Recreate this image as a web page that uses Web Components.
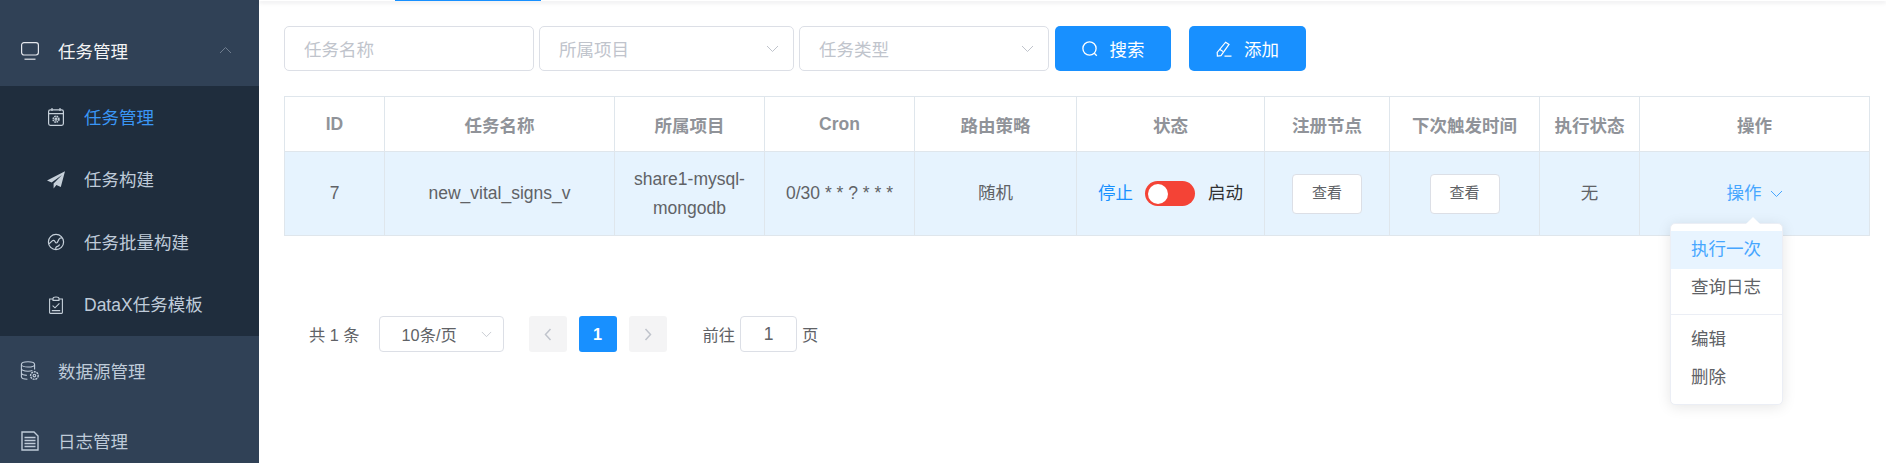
<!DOCTYPE html>
<html lang="zh">
<head>
<meta charset="utf-8">
<title>任务管理</title>
<style>
  html, body { margin: 0; height: 100%; overflow: hidden; background: #fff; }
  body {
    display: flex;
    font-family: "Liberation Sans", "Noto Sans CJK SC", sans-serif;
    color: #606266;
  }
</style>
</head>
<body>
<side-menu>
  <menu-group label="任务管理" open>
    <svg slot="icon" width="20" height="20" viewBox="0 0 20 20" fill="none" stroke="currentColor" stroke-width="1.2"><rect x="1.600" y="1.600" width="16.800" height="12.400" rx="2.400"/><path d="M4.500 18.200h11"/></svg>
    <menu-entry active>
      <svg slot="icon" width="18" height="20" viewBox="0 0 18 20" fill="none" stroke="currentColor" stroke-width="1.2"><rect x="1.600" y="2.800" width="14.800" height="15.600" rx="1.800"/><path d="M5 1v3M13 1v3M1.600 6.600h14.800"/><circle cx="9" cy="12.200" r="2.900" stroke-dasharray="1.600 .7" stroke-width="1.600"/><circle cx="9" cy="12.200" r="1"/></svg>
      任务管理
    </menu-entry>
    <menu-entry>
      <svg slot="icon" width="20" height="20" viewBox="0 0 20 20" fill="currentColor"><path d="M19 1.200 1 10.400l4.600 2.200L16 5 7.600 13.600v5l2.800-3.700 4.400 2.200z"/></svg>
      任务构建
    </menu-entry>
    <menu-entry>
      <svg slot="icon" width="18" height="18" viewBox="0 0 18 18" fill="none" stroke="currentColor" stroke-width="1.2"><circle cx="9" cy="9" r="7.600"/><path d="M2 10.600c2-.4 2.600-3.400 4.600-3.200 1.800.2 1.200 2.600 2.800 2.600 1.800 0 1.600-3.400 3.200-4.600.6-.5 1.600-.6 2.600-.5M9 16.400c-.8-1.600.2-2.600 1.600-3 1.200-.3 1.600-1 2-1.800"/></svg>
      任务批量构建
    </menu-entry>
    <menu-entry>
      <svg slot="icon" width="16" height="18" viewBox="0 0 16 18" fill="none" stroke="currentColor" stroke-width="1.1"><path d="M5 3H1.600v13.600a.8.8 0 0 0 .8.8h11.200a.8.8 0 0 0 .8-.8V3H11"/><path d="M5 4.400V2.600C5 1.800 6 1 8 1s3 .8 3 1.600v1.800z"/><path d="m4.600 9.600 2.400 2.200 4.400-4.400M3.800 14.600h8.400"/></svg>
      DataX任务模板
    </menu-entry>
  </menu-group>
  <menu-group label="数据源管理">
    <svg slot="icon" width="20" height="20" viewBox="0 0 20 20" fill="none" stroke="currentColor" stroke-width="1.1"><ellipse cx="8" cy="3.400" rx="6.600" ry="2.600"/><path d="M1.400 3.400v12.400c0 1.400 2.600 2.400 6 2.400M1.400 7.600c0 1.400 2.800 2.600 6.600 2.600 1.600 0 3.200-.2 4.400-.7M1.400 11.800c0 1.400 2.400 2.400 5.400 2.600M14.600 3.400v5"/><circle cx="14.400" cy="14.600" r="3.800" stroke-dasharray="2 .8" stroke-width="1.400"/><circle cx="14.400" cy="14.600" r="1.300"/></svg>
  </menu-group>
  <menu-group label="日志管理">
    <svg slot="icon" width="20" height="20" viewBox="0 0 20 20" fill="none" stroke="currentColor" stroke-width="1.4"><path d="M2 1h12l4 4v14H2z"/><path stroke-width="1.500" d="M4.500 6.500h11M4.500 9.500h11M4.500 12.500h11M4.500 15.500h11"/></svg>
  </menu-group>
</side-menu>

<main-panel>
  <tool-bar>
    <form-field placeholder="任务名称" style="width:250px"></form-field>
    <form-field placeholder="所属项目" select style="width:255px"></form-field>
    <form-field placeholder="任务类型" select style="width:250px"></form-field>
    <blue-button style="margin-left:1px;width:116px">
      <svg slot="icon" width="16" height="16" viewBox="0 0 16 16" fill="none" stroke="currentColor" stroke-width="1.300"><circle cx="7.500" cy="7.500" r="6.600"/><path d="m12.300 12.300 2.500 2.500"/></svg>
      搜索
    </blue-button>
    <blue-button style="margin-left:13px;width:117px">
      <svg slot="icon" width="16" height="16" viewBox="0 0 16 16" fill="none" stroke="currentColor" stroke-width="1.200"><path d="M9.600 1.200 13 3.400 5 14.600 1.400 15 1.200 11.400z"/><path d="M3.600 8.200 7 10.400M8.500 15.200h7"/></svg>
      添加
    </blue-button>
  </tool-bar>
  <task-table></task-table>
  <page-bar></page-bar>
</main-panel>

<script>
// sidebar ----------------------------------------------------------------
class SideMenu extends HTMLElement {
  constructor() {
    super()
    this.attachShadow({ mode: "open" })
    this.shadowRoot.innerHTML = `
    <style>
    :host {
      display: block;
      flex: none;
      width: 259px;
      height: 100%;
      padding-top: 16px;
      box-sizing: border-box;
      overflow: hidden;
      background: #304156;
    }
    </style>
    <slot></slot>`
  }
}
customElements.define("side-menu", SideMenu)

class MenuGroup extends HTMLElement {
  constructor() {
    super()
    this.attachShadow({ mode: "open" })
    this.shadowRoot.innerHTML = `
    <style>
    :host { display: block; }
    #title {
      display: flex;
      align-items: center;
      justify-content: flex-start;
      height: 70px;
      padding: 0 27px 0 20px;
      font-size: 17.5px;
      color: #bfcbd9;
    }
    :host([open]) #title { color: #f4f4f5; }
    #icon { display: flex; width: 38px; flex: none; color: #bfcbd9; }
    :host([open]) #icon { color: #e4e7ed; }
    #text { padding-bottom: 2px; }
    #arrow { display: none; margin: -2px 0 0 auto; }
    :host([open]) #arrow { display: block; }
    #items { display: none; background: #1f2d3d; }
    :host([open]) #items { display: block; }
    </style>
    <div id="title">
      <span id="icon"><slot name="icon"></slot></span>
      <span id="text">${this.getAttribute("label")}</span>
      <svg id="arrow" width="13" height="8" viewBox="0 0 13 8" fill="none" stroke="#6f7d8f" stroke-width="1"><path d="m1 7 5.500-5.500L12 7"/></svg>
    </div>
    <div id="items"><slot></slot></div>`
  }
}
customElements.define("menu-group", MenuGroup)

class MenuEntry extends HTMLElement {
  constructor() {
    super()
    this.attachShadow({ mode: "open" })
    this.shadowRoot.innerHTML = `
    <style>
    :host {
      display: flex;
      align-items: center;
      height: 62.5px;
      padding-left: 46px;
      font-size: 17.5px;
      color: #bfcbd9;
    }
    :host([active]) { color: #3a96f5; }
    #icon { display: flex; justify-content: center; width: 20px; margin-right: 18px; flex: none; color: #c6d0da; }
    #text { padding-bottom: 2px; }
    </style>
    <span id="icon"><slot name="icon"></slot></span>
    <span id="text"><slot></slot></span>`
  }
}
customElements.define("menu-entry", MenuEntry)

// main area --------------------------------------------------------------
class MainPanel extends HTMLElement {
  constructor() {
    super()
    this.attachShadow({ mode: "open" })
    this.shadowRoot.innerHTML = `
    <style>
    :host { display: block; flex: 1; min-width: 0; position: relative; }
    #strip {
      height: 1px;
      padding-left: 136px;
      box-shadow: 0 1px 4px rgba(0, 21, 41, 0.25);
    }
    #strip div { width: 146px; height: 1px; background: #1890ff; }
    #content { padding: 25px 0 0 25px; }
    </style>
    <div id="strip"><div></div></div>
    <div id="content"><slot></slot></div>`
  }
}
customElements.define("main-panel", MainPanel)

class ToolBar extends HTMLElement {
  constructor() {
    super()
    this.attachShadow({ mode: "open" })
    this.shadowRoot.innerHTML = `
    <style>
    :host { display: flex; gap: 5px; height: 45px; margin-bottom: 25px; }
    </style>
    <slot></slot>`
  }
}
customElements.define("tool-bar", ToolBar)

const chevronDown = (size, color) => `<svg width="${size}" height="${Math.round(size * 0.6)}" viewBox="0 0 13 8" fill="none" stroke="${color}" stroke-width="1"><path d="m1 1 5.500 5.500L12 1"/></svg>`

class FormField extends HTMLElement {
  constructor() {
    super()
    this.attachShadow({ mode: "open" })
    this.shadowRoot.innerHTML = `
    <style>
    :host {
      display: flex;
      align-items: center;
      justify-content: space-between;
      box-sizing: border-box;
      padding: 0 14px 0 19px;
      border: 1px solid #dcdfe6;
      border-radius: 5px;
      background: #fff;
      font-size: 17.5px;
      color: #c0c4cc;
    }
    </style>
    <span>${this.getAttribute("placeholder")}</span>
    ${this.hasAttribute("select") ? chevronDown(13, "#c0c4cc") : ""}`
  }
}
customElements.define("form-field", FormField)

class BlueButton extends HTMLElement {
  constructor() {
    super()
    this.attachShadow({ mode: "open" })
    this.shadowRoot.innerHTML = `
    <style>
    :host {
      display: flex;
      align-items: center;
      justify-content: center;
      gap: 12px;
      border-radius: 5px;
      background: #1890ff;
      color: #fff;
      font-size: 17.5px;
    }
    ::slotted(svg) { flex: none; }
    </style>
    <slot name="icon"></slot>
    <span><slot></slot></span>`
  }
}
customElements.define("blue-button", BlueButton)

// table ------------------------------------------------------------------
class PlainButton extends HTMLElement {
  constructor() {
    super()
    this.attachShadow({ mode: "open" })
    this.shadowRoot.innerHTML = `
    <style>
    :host {
      display: inline-flex;
      align-items: center;
      justify-content: center;
      box-sizing: border-box;
      width: 70px;
      height: 40px;
      border: 1px solid #dcdfe6;
      border-radius: 4px;
      background: #fff;
      font-size: 15px;
      color: #606266;
    }
    </style>
    <slot></slot>`
  }
}
customElements.define("plain-button", PlainButton)

class StatusSwitch extends HTMLElement {
  constructor() {
    super()
    this.attachShadow({ mode: "open" })
    this.shadowRoot.innerHTML = `
    <style>
    :host { display: inline-flex; align-items: center; gap: 12px; font-size: 17.5px; }
    #off { color: #1890ff; }
    #on { color: #303133; margin-left: 1px; }
    #track {
      display: flex;
      align-items: center;
      width: 50px;
      height: 25px;
      padding-left: 3px;
      box-sizing: border-box;
      border-radius: 13px;
      background: #f44336;
    }
    #knob { width: 20px; height: 20px; border-radius: 50%; background: #fff; }
    </style>
    <span id="off">停止</span>
    <span id="track"><span id="knob"></span></span>
    <span id="on">启动</span>`
  }
}
customElements.define("status-switch", StatusSwitch)

class ActionMenu extends HTMLElement {
  constructor() {
    super()
    this.attachShadow({ mode: "open" })
    this.shadowRoot.innerHTML = `
    <style>
    :host { display: inline-block; color: #46a6ff; font-size: 17.5px; }
    #label { display: flex; align-items: center; gap: 8px; }
    #popup {
      position: absolute;
      top: 71px;
      left: 30px;
      z-index: 5;
      width: 113px;
      box-sizing: border-box;
      padding: 7px 0;
      border: 1px solid #ebeef5;
      border-radius: 5px;
      background: #fff;
      box-shadow: 0 2px 14px rgba(0, 0, 0, 0.1);
      font-size: 17.5px;
      line-height: normal;
      color: #606266;
      text-align: left;
    }
    #popup::before {
      content: "";
      position: absolute;
      top: -5px;
      left: 77px;
      width: 10px;
      height: 10px;
      background: #fff;
      transform: rotate(45deg);
    }
    .item { position: relative; height: 38px; line-height: 36px; padding-left: 20px; }
    .item.hover { background: #e8f4ff; color: #46a6ff; }
    hr { margin: 7px 0 6px; border: 0; border-top: 1px solid #ebeef5; }
    </style>
    <div id="label">操作 ${chevronDown(13, "#46a6ff")}</div>
    <div id="popup">
      <div class="item hover">执行一次</div>
      <div class="item">查询日志</div>
      <hr>
      <div class="item">编辑</div>
      <div class="item">删除</div>
    </div>`
  }
}
customElements.define("action-menu", ActionMenu)

class TaskTable extends HTMLElement {
  constructor() {
    super()
    this.attachShadow({ mode: "open" })
    const heads = ["ID", "任务名称", "所属项目", "Cron", "路由策略", "状态", "注册节点", "下次触发时间", "执行状态", "操作"]
    const cells = [
      "7",
      "new_vital_signs_v",
      "share1-mysql-mongodb",
      "0/30 * * ? * * *",
      "随机",
      "<status-switch></status-switch>",
      "<plain-button>查看</plain-button>",
      "<plain-button>查看</plain-button>",
      "无",
      "<action-menu></action-menu>",
    ]
    this.shadowRoot.innerHTML = `
    <style>
    :host {
      display: grid;
      width: max-content;
      grid-template-columns: 100px 230px 150px 150px 162px 188px 125px 150px 100px 230px;
      grid-template-rows: 55px 84px;
      border-top: 1px solid #dfe6ec;
      border-left: 1px solid #dfe6ec;
      font-size: 17.5px;
    }
    .cell {
      position: relative;
      display: flex;
      align-items: center;
      justify-content: center;
      box-sizing: border-box;
      padding: 0 14px;
      border-right: 1px solid #dfe6ec;
      border-bottom: 1px solid #dfe6ec;
      text-align: center;
    }
    .head { font-weight: 700; color: #909399; }
    .body { background: #e6f3fe; color: #606266; line-height: 28.5px; }
    </style>
    ${heads.map((h) => `<div class="cell head">${h}</div>`).join("")}
    ${cells.map((c) => `<div class="cell body">${c}</div>`).join("")}`
  }
}
customElements.define("task-table", TaskTable)

// pagination -------------------------------------------------------------
class PageBar extends HTMLElement {
  constructor() {
    super()
    this.attachShadow({ mode: "open" })
    this.shadowRoot.innerHTML = `
    <style>
    :host {
      display: flex;
      align-items: center;
      height: 36px;
      margin: 80px 0 0 25px;
      font-size: 16.25px;
      color: #606266;
    }
    #size {
      display: flex;
      align-items: center;
      justify-content: space-between;
      box-sizing: border-box;
      width: 125px;
      height: 36px;
      margin: 0 25px 0 19px;
      padding: 0 11px 0 22px;
      border: 1px solid #dcdfe6;
      border-radius: 4px;
    }
    .page {
      display: flex;
      align-items: center;
      justify-content: center;
      width: 38px;
      height: 36px;
      margin-right: 12px;
      border-radius: 3px;
      background: #f4f4f5;
    }
    .page.current { background: #1890ff; color: #fff; font-weight: 700; }
    #jump { margin-left: 24px; }
    #num {
      display: flex;
      align-items: center;
      justify-content: center;
      box-sizing: border-box;
      width: 57px;
      height: 36px;
      margin: 0 5px;
      border: 1px solid #dcdfe6;
      border-radius: 4px;
      font-size: 17.5px;
    }
    </style>
    <span>共 1 条</span>
    <div id="size"><span>10条/页</span>${chevronDown(11, "#c0c4cc")}</div>
    <div class="page"><svg width="8" height="13" viewBox="0 0 8 13" fill="none" stroke="#c0c4cc" stroke-width="1.500"><path d="M6.500 1 1.500 6.500l5 5.500"/></svg></div>
    <div class="page current">1</div>
    <div class="page"><svg width="8" height="13" viewBox="0 0 8 13" fill="none" stroke="#c0c4cc" stroke-width="1.500"><path d="m1.500 1 5 5.500-5 5.500"/></svg></div>
    <span id="jump">前往</span>
    <div id="num">1</div>
    <span>页</span>`
  }
}
customElements.define("page-bar", PageBar)
</script>
</body>
</html>
